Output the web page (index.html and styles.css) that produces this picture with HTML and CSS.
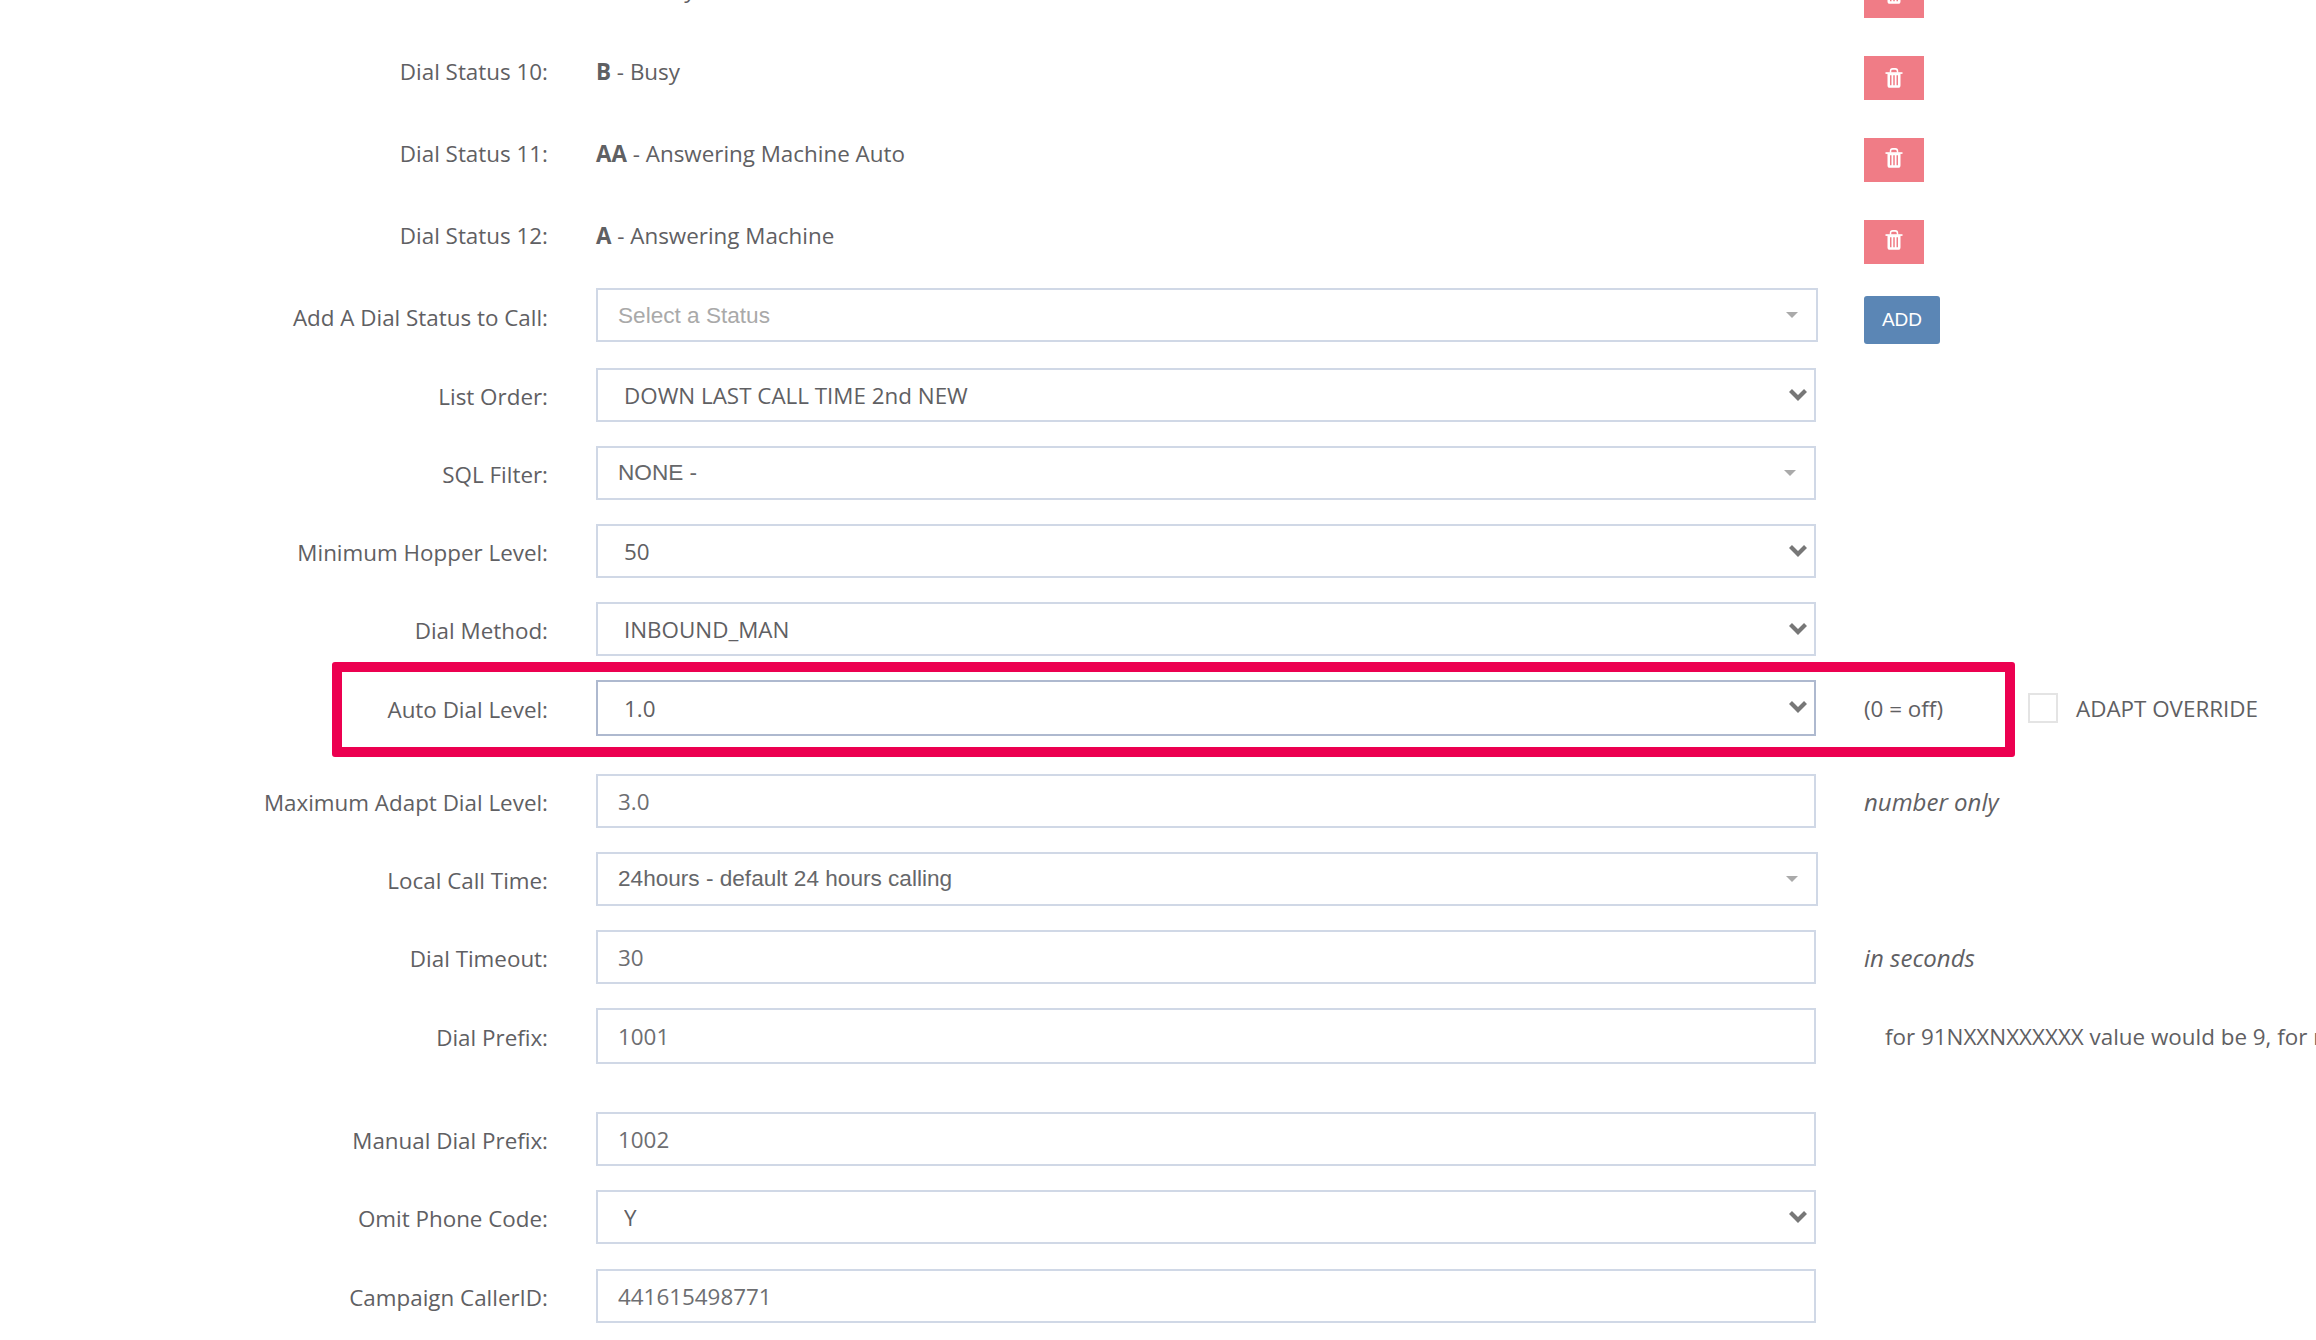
FILE: index.html
```html
<!DOCTYPE html>
<html lang="en">
<head>
<meta charset="utf-8">
<title>Campaign settings</title>
<link rel="stylesheet" href="styles.css">
</head>
<body>
<svg class="defs" width="0" height="0" aria-hidden="true">
  <defs>
    <symbol id="trash" viewBox="0 0 18 19" preserveAspectRatio="none">
      <path d="M0.500 4h17v1.600h-17z" fill="#fff"/>
      <path d="M5.500 4.500V3c0-1.300.9-2.200 2.200-2.200h2.600c1.300 0 2.200.9 2.200 2.200v1.500" fill="none" stroke="#fff" stroke-width="1.500"/>
      <path fill-rule="evenodd" fill="#fff" d="M2.500 5h13v11.600c0 1.300-.9 2.200-2.200 2.200H4.700c-1.300 0-2.200-.9-2.200-2.200zM5 7v9.500h1.500V7zM8.250 7v9.500h1.500V7zM11.500 7v9.500H13V7z"/>
    </symbol>
    <symbol id="chevron" viewBox="0 0 18 13">
      <path d="M1.500 2.500l7.500 7.500 7.500-7.500" fill="none" stroke="#777" stroke-width="4.200"/>
    </symbol>
  </defs>
</svg>
<form class="form">
  <div class="row row-status">
    <label class="label">Dial Status 9:</label>
    <div class="value"><b>AB</b> - Busy</div>
    <div class="aside"><button type="button" class="btn-del"><svg class="ico-trash"><use href="#trash"/></svg></button></div>
  </div>
  <div class="row row-status">
    <label class="label">Dial Status 10:</label>
    <div class="value"><b>B</b> - Busy</div>
    <div class="aside"><button type="button" class="btn-del"><svg class="ico-trash"><use href="#trash"/></svg></button></div>
  </div>
  <div class="row row-status">
    <label class="label">Dial Status 11:</label>
    <div class="value"><b>AA</b> - Answering Machine Auto</div>
    <div class="aside"><button type="button" class="btn-del"><svg class="ico-trash"><use href="#trash"/></svg></button></div>
  </div>
  <div class="row row-status row-status-last">
    <label class="label">Dial Status 12:</label>
    <div class="value"><b>A</b> - Answering Machine</div>
    <div class="aside"><button type="button" class="btn-del"><svg class="ico-trash"><use href="#trash"/></svg></button></div>
  </div>

  <div class="row row-add">
    <label class="label">Add A Dial Status to Call:</label>
    <div class="combo combo-wide combo-empty"><span>Select a Status</span><i class="caret"></i></div>
    <div class="aside aside-add"><button type="button" class="btn-add">ADD</button></div>
  </div>
  <div class="row">
    <label class="label">List Order:</label>
    <div class="select-wrap"><select class="select"><option>DOWN LAST CALL TIME 2nd NEW</option></select><svg class="chevron"><use href="#chevron"/></svg></div>
  </div>
  <div class="row">
    <label class="label">SQL Filter:</label>
    <div class="combo"><span>NONE -</span><i class="caret"></i></div>
  </div>
  <div class="row">
    <label class="label">Minimum Hopper Level:</label>
    <div class="select-wrap"><select class="select"><option>50</option></select><svg class="chevron"><use href="#chevron"/></svg></div>
  </div>
  <div class="row">
    <label class="label">Dial Method:</label>
    <div class="select-wrap"><select class="select"><option>INBOUND_MAN</option></select><svg class="chevron"><use href="#chevron"/></svg></div>
  </div>
  <div class="row row-focus">
    <label class="label">Auto Dial Level:</label>
    <div class="select-wrap"><select class="select select-focus"><option>1.0</option></select><svg class="chevron"><use href="#chevron"/></svg></div>
    <div class="aside aside-adapt">
      <span class="off">(0 = off)</span>
      <span class="check"></span>
      <span class="check-label">ADAPT OVERRIDE</span>
    </div>
    <div class="highlight"></div>
  </div>
  <div class="row">
    <label class="label">Maximum Adapt Dial Level:</label>
    <input class="input" value="3.0">
    <div class="aside hint">number only</div>
  </div>
  <div class="row">
    <label class="label">Local Call Time:</label>
    <div class="combo combo-wide"><span>24hours - default 24 hours calling</span><i class="caret"></i></div>
  </div>
  <div class="row">
    <label class="label">Dial Timeout:</label>
    <input class="input" value="30">
    <div class="aside hint">in seconds</div>
  </div>
  <div class="row row-prefix">
    <label class="label">Dial Prefix:</label>
    <input class="input input-tall" value="1001">
    <div class="aside note">for 91NXXNXXXXXX value would be 9, for manual dial prefix</div>
  </div>
  <div class="row">
    <label class="label">Manual Dial Prefix:</label>
    <input class="input" value="1002">
  </div>
  <div class="row row-omit">
    <label class="label">Omit Phone Code:</label>
    <div class="select-wrap"><select class="select"><option>Y</option></select><svg class="chevron"><use href="#chevron"/></svg></div>
  </div>
  <div class="row">
    <label class="label">Campaign CallerID:</label>
    <input class="input" value="441615498771">
  </div>
</form>
</body>
</html>
```
FILE: styles.css
```css
* { box-sizing: border-box; }
html, body { height: 100%; }
body {
  margin: 0;
  overflow: hidden;
  background: #fff;
  color: #5f6063;
  font-family: "Open Sans", sans-serif;
  font-size: 22.4px;
}
.defs { position: absolute; }
.form {
  display: flex;
  flex-direction: column;
  gap: 24px;
  margin-top: -26px;
}
.row {
  position: relative;
  display: grid;
  grid-template-columns: 548px 1220px 1fr;
  column-gap: 48px;
  align-items: center;
  min-height: 54px;
}
.label {
  text-align: right;
  white-space: nowrap;
  padding-top: 3px;
}
.value { white-space: nowrap; }
.value b { font-weight: 700; }
.aside { white-space: nowrap; }

.row-status { min-height: 44px; margin-bottom: 14px; align-items: start; }
.row-status .label, .row-status .value { line-height: 31px; padding-top: 0; }
.row-status-last { margin-bottom: 0; }

.btn-del {
  display: flex;
  align-items: center;
  justify-content: center;
  width: 60px;
  height: 44px;
  padding: 0 0 4px;
  border: 0;
  background: #f07c86;
}
.row:nth-child(2) .btn-del { padding-bottom: 1px; }
.ico-trash { width: 18px; height: 20px; }

.btn-add {
  display: block;
  width: 76px;
  height: 48px;
  padding: 0;
  border: 0;
  border-radius: 3px;
  background: #5b86b5;
  color: #fff;
  font-family: "Liberation Sans", sans-serif;
  font-size: 19px;
}
.aside-add { align-self: start; margin-top: 8px; }
.row-add .combo { align-self: start; }

.input, .select, .combo {
  width: 100%;
  height: 54px;
  border: 2px solid #d0d8e6;
  border-radius: 0;
  background: #fff;
  color: #5f6063;
  font-size: 22.4px;
  outline: 0;
}
.input {
  padding: 0 20px;
  color: #6d6e71;
  font-family: "Open Sans", sans-serif;
  line-height: 50px;
}
.input-tall { height: 56px; }
.select-wrap { position: relative; }
.select {
  display: block;
  appearance: none;
  padding: 0 50px 0 26px;
  font-family: "Open Sans", sans-serif;
}
.select-focus { border-color: #aeb9cf; height: 56px; }
.chevron {
  position: absolute;
  right: 9px;
  top: 20px;
  width: 18px;
  height: 13px;
  pointer-events: none;
}
.combo {
  position: relative;
  display: flex;
  align-items: center;
  padding: 0 20px;
  color: #66676a;
  font-family: "Liberation Sans", sans-serif;
  font-size: 22.6px;
}
.combo-wide { width: calc(100% + 2px); }
.combo-empty { color: #a9a9a9; padding-top: 2px; }
.caret {
  position: absolute;
  right: 18px;
  top: 22px;
  width: 0;
  height: 0;
  border-left: 6px solid transparent;
  border-right: 6px solid transparent;
  border-top: 6px solid #aaa;
}
.row-focus { min-height: 56px; margin-bottom: 14px; }
.aside-adapt { display: flex; align-items: center; }
.off { width: 164px; }
.check {
  width: 30px;
  height: 30px;
  border: 2px solid #e4e4e4;
  margin-right: 18px;
}
.highlight {
  position: absolute;
  left: 332px;
  top: -18px;
  width: 1683px;
  height: 95px;
  border: 10px solid #ec0050;
  border-radius: 3px;
  pointer-events: none;
}
.hint { font-style: italic; font-size: 24px; }
.note { padding-left: 21px; }
.row-prefix { min-height: 56px; margin-bottom: 24px; }
.row-omit { margin-bottom: 1px; }
```
